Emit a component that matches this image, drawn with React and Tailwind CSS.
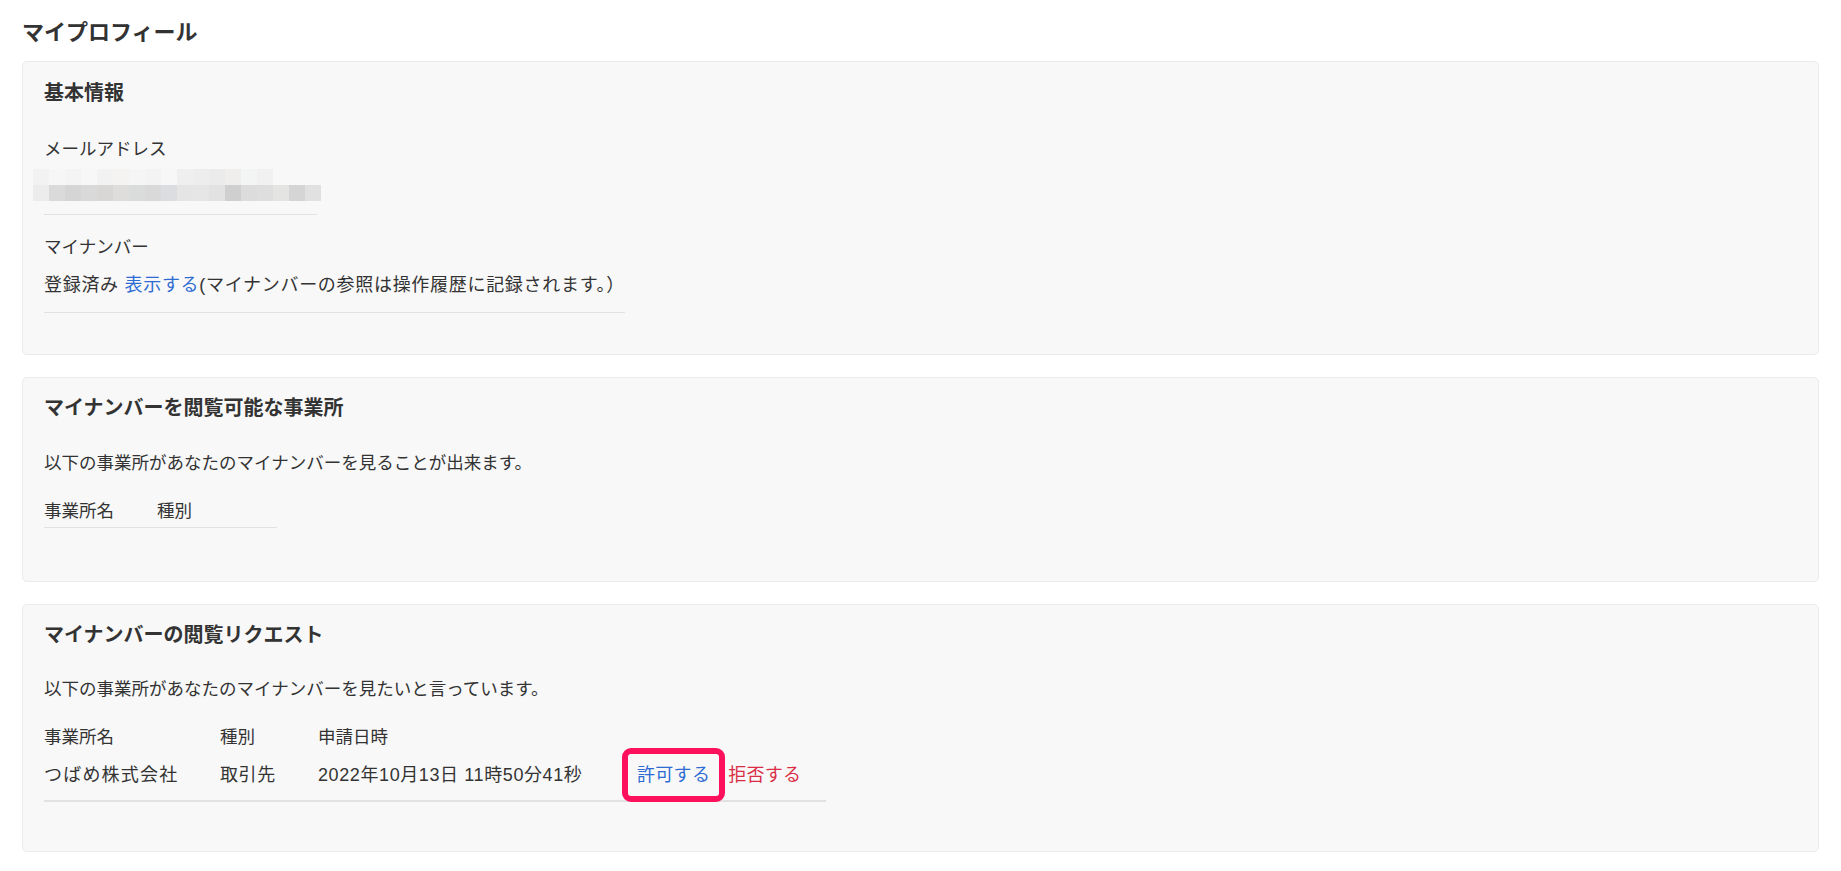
import React from "react";

const blurTop = [
  "bg-[#f2f2f2]", "bg-[#f6f6f6]", "bg-[#f4f4f4]", "bg-[#f7f7f7]", "bg-[#f2f2f2]",
  "bg-[#f4f3f2]", "bg-[#f5f5f5]", "bg-[#f3f3f3]", "bg-[#f7f7f7]", "bg-[#efefef]",
  "bg-[#ededed]", "bg-[#ebebeb]", "bg-[#efeeec]", "bg-[#f3f5f4]", "bg-[#f1f1f1]",
];

const blurBottom = [
  "bg-[#ececec]", "bg-[#dadada]", "bg-[#d5d5d5]", "bg-[#d9d9d9]", "bg-[#d8d7d5]",
  "bg-[#dfdddb]", "bg-[#d9dcdb]", "bg-[#d9d9d9]", "bg-[#dcdde0]", "bg-[#e5e5e5]",
  "bg-[#e6e6e6]", "bg-[#e2e2e2]", "bg-[#cfcfcf]", "bg-[#dcdcdc]", "bg-[#dedede]",
  "bg-[#e4e4e2]", "bg-[#d5d5d5]", "bg-[#e1e1e1]",
];

function Card({ title, className, children }) {
  return (
    <section
      className={
        "rounded-[5px] border border-[#ebebeb] bg-[#f8f8f8] px-[21px] " + className
      }
    >
      <h2 className="text-[20px] font-bold leading-[28px]">{title}</h2>
      {children}
    </section>
  );
}

export default function App() {
  return (
    <div
      className="min-h-screen bg-white px-[22px] pt-[18px] text-[17.5px] leading-[26px] text-[#333]"
      style={{ fontFamily: '"Liberation Sans", "Noto Sans CJK JP", sans-serif' }}
    >
      <h1 className="mb-[13px] text-[22px] font-bold leading-[30px]">マイプロフィール</h1>

      <Card title="基本情報" className="pt-[17px] pb-[41px]">
        <div className="mt-[29px] w-[273px] border-b border-[#e2e2e2] pb-[13px]">
          <div>メールアドレス</div>
          <div className="-ml-[11px] mt-[7px] w-[288px]">
            <div className="flex h-4">
              {blurTop.map((c, i) => (
                <div key={i} className={"h-4 w-4 " + c} />
              ))}
            </div>
            <div className="flex h-4">
              {blurBottom.map((c, i) => (
                <div key={i} className={"h-4 w-4 " + c} />
              ))}
            </div>
          </div>
        </div>
        <div className="mt-[19px] w-fit border-b border-[#e2e2e2] pb-[14px]">
          <div>マイナンバー</div>
          <div className="mt-[12px] text-[18px] tracking-[0.7px]">
            登録済み <a className="text-[#2d6bd3]">表示する</a>(マイナンバーの参照は操作履歴に記録されます。）
          </div>
        </div>
      </Card>

      <Card title="マイナンバーを閲覧可能な事業所" className="mt-[22px] pt-[16px] pb-[53px]">
        <p className="mt-[28px]">以下の事業所があなたのマイナンバーを見ることが出来ます。</p>
        <div className="mt-[22px] flex w-[233px] border-b border-[#e2e2e2] pb-[3px]">
          <div className="w-[113px]">事業所名</div>
          <div className="w-[120px]">種別</div>
        </div>
      </Card>

      <Card title="マイナンバーの閲覧リクエスト" className="mt-[22px] pt-[16px] pb-[49px]">
        <p className="mt-[27px]">以下の事業所があなたのマイナンバーを見たいと言っています。</p>
        <div className="mt-[22px] w-[782px]">
          <div className="flex h-[26px]">
            <div className="w-[176px]">事業所名</div>
            <div className="w-[98px]">種別</div>
            <div className="w-[304px]">申請日時</div>
          </div>
          <div className="flex h-[52px] items-center border-b-2 border-[#e2e2e2] text-[18px] tracking-[0.6px]">
            <div className="w-[176px] tracking-[1.2px]">つばめ株式会社</div>
            <div className="w-[98px]">取引先</div>
            <div className="w-[304px]">2022年10月13日 11時50分41秒</div>
            <div className="flex pl-[15px] tracking-[0.3px]">
              <span className="relative">
                <a className="text-[#2d6bd3]">許可する</a>
                <span className="pointer-events-none absolute -inset-x-[15px] -inset-y-[14px] rounded-[9px] border-[6px] border-[#fd105c]" />
              </span>
              <a className="ml-[18px] text-[#d92d45]">拒否する</a>
            </div>
          </div>
        </div>
      </Card>
    </div>
  );
}
